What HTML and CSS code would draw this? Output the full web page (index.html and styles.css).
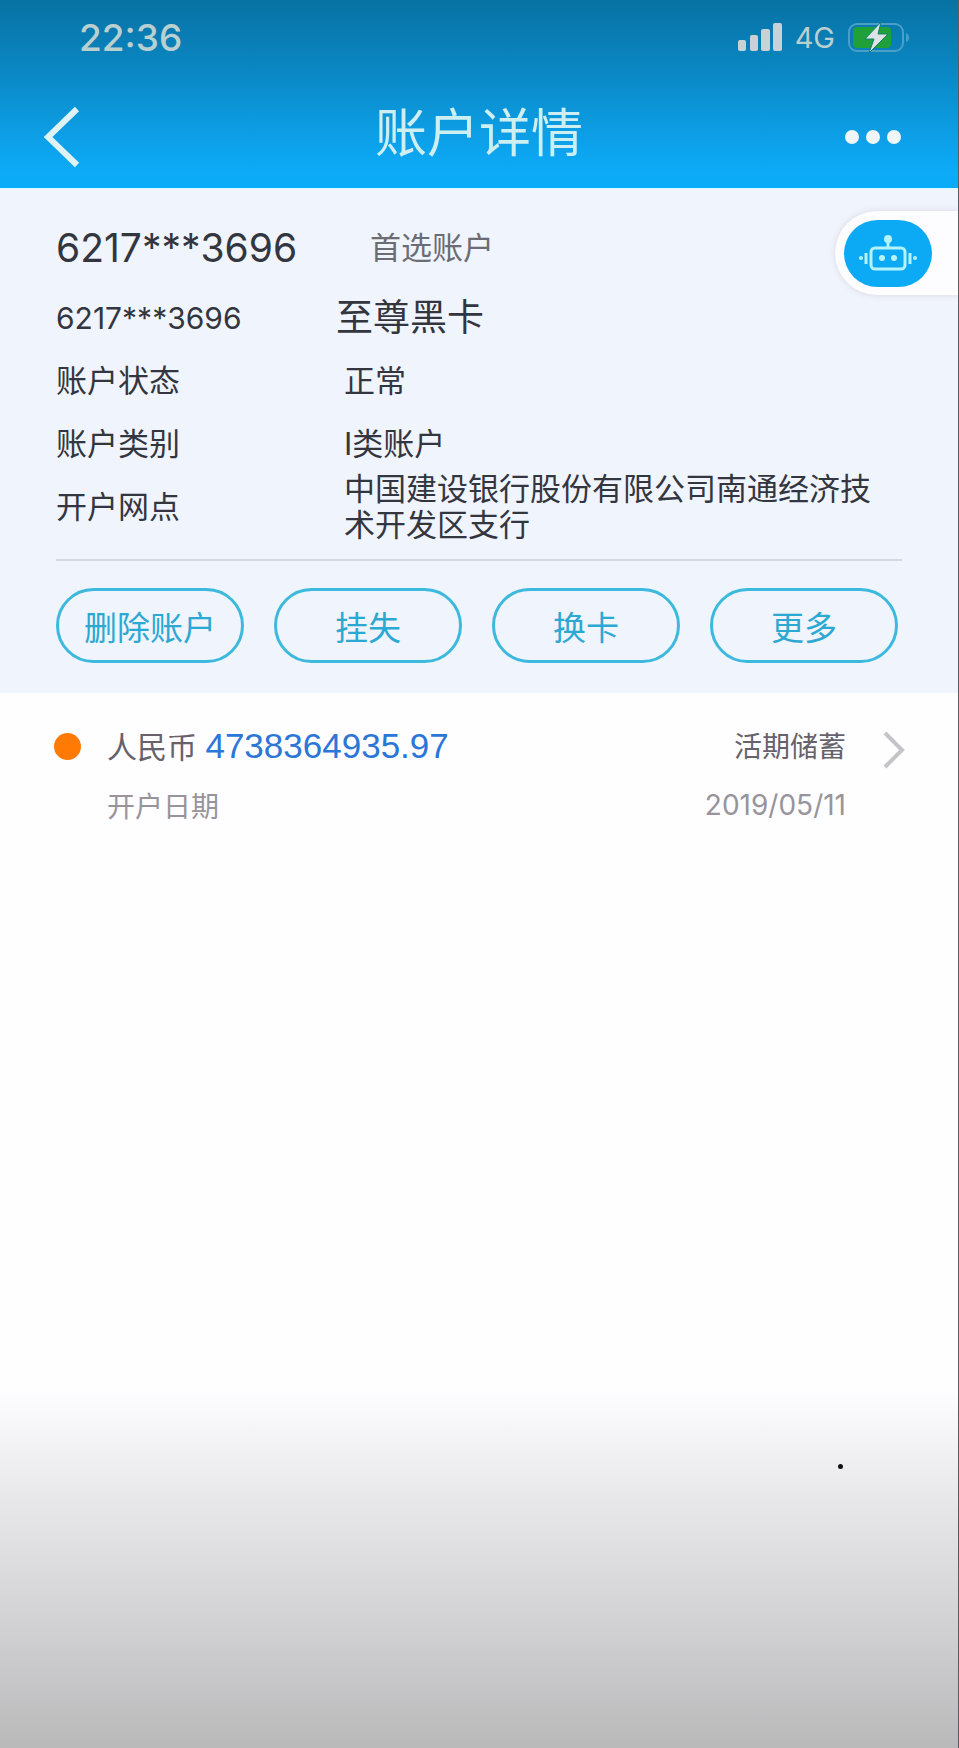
FILE: index.html
```
<!DOCTYPE html>
<html lang="zh-CN">

<head>
    <meta charset="utf-8">
    <meta name="viewport" content="width=device-width, initial-scale=1">
    <title>账户详情</title>
    <link rel="stylesheet" href="styles.css">
</head>

<body>
    <header class="header">
        <div class="statusbar">
            <span class="time">22:36</span>
            <div class="status-icons">
                <svg class="signal" width="44" height="28" viewBox="0 0 44 28">
                    <rect x="0" y="17" width="8" height="11" rx="2" />
                    <rect x="12" y="12" width="8" height="16" rx="2" />
                    <rect x="23" y="6" width="9" height="22" rx="2" />
                    <rect x="35" y="0" width="9" height="28" rx="2" />
                </svg>
                <span class="network">4G</span>
                <svg class="battery" width="62" height="32" viewBox="0 0 62 32">
                    <rect class="battery-case" x="1" y="3" width="54" height="27" rx="8" />
                    <path class="battery-tip" d="M58 12c4 1 4 8 0 9z" />
                    <rect class="battery-level" x="5" y="6" width="38" height="21" rx="4" />
                    <path class="battery-bolt" d="M33 1L17 18h9l-5 14 19-19h-10z" />
                </svg>
            </div>
        </div>
        <nav class="navbar">
            <button class="nav-btn back" type="button" aria-label="返回">
                <svg width="36" height="62" viewBox="0 0 36 62">
                    <path d="M33 3L4 31l29 28" />
                </svg>
            </button>
            <h1 class="title">账户详情</h1>
            <button class="nav-btn more" type="button" aria-label="更多选项">
                <svg width="58" height="16" viewBox="0 0 58 16">
                    <circle cx="8" cy="8" r="7" />
                    <circle cx="29" cy="8" r="7" />
                    <circle cx="50" cy="8" r="7" />
                </svg>
            </button>
        </nav>
    </header>

    <section class="account">
        <dl class="info">
            <div class="row row-main">
                <dt>6217***3696</dt>
                <dd>首选账户</dd>
            </div>
            <div class="row row-card">
                <dt>6217***3696</dt>
                <dd>至尊黑卡</dd>
            </div>
            <div class="row">
                <dt>账户状态</dt>
                <dd>正常</dd>
            </div>
            <div class="row">
                <dt>账户类别</dt>
                <dd>I类账户</dd>
            </div>
            <div class="row">
                <dt>开户网点</dt>
                <dd>中国建设银行股份有限公司南通经济技术开发区支行</dd>
            </div>
        </dl>
        <div class="actions">
            <button type="button">删除账户</button>
            <button type="button">挂失</button>
            <button type="button">换卡</button>
            <button type="button">更多</button>
        </div>
        <button class="assistant" type="button" aria-label="智能客服">
            <span class="assistant-face">
                <svg width="60" height="38" viewBox="0 0 60 38">
                    <circle class="fill" cx="30" cy="5" r="4" />
                    <path d="M30 8v6" />
                    <rect x="13" y="14" width="34" height="21" rx="4" />
                    <circle class="fill" cx="24" cy="24" r="3" />
                    <circle class="fill" cx="36" cy="24" r="3" />
                    <path d="M8 19v11M52 19v11" />
                    <circle class="fill" cx="3" cy="24" r="2" />
                    <circle class="fill" cx="57" cy="24" r="2" />
                </svg>
            </span>
        </button>
    </section>

    <main class="deposits">
        <a class="deposit" href="#">
            <span class="bullet"></span>
            <span class="deposit-text">
                <span class="line">
                    <span>人民币 <b class="amount">4738364935.97</b></span>
                    <span class="type">活期储蓄</span>
                </span>
                <span class="line line-date">
                    <span>开户日期</span>
                    <span>2019/05/11</span>
                </span>
            </span>
            <svg class="arrow" width="22" height="38" viewBox="0 0 22 38">
                <path d="M2 2l17 17L2 36" />
            </svg>
        </a>
        <span class="speck"></span>
    </main>
</body>

</html>
```
FILE: styles.css
```
* {
    box-sizing: border-box;
}

body {
    position: relative;
    display: flex;
    flex-direction: column;
    min-height: 100vh;
    margin: 0;
    border-right: 1px solid #5c5b64;
    background: #fefdff;
    color: #34363f;
    font-family: Inter, "Noto Sans CJK SC", sans-serif;
    font-size: 31px;
}

button {
    padding: 0;
    border: 0;
    background: none;
    font: inherit;
    cursor: pointer;
}

svg {
    display: block;
}

/* header */

.header {
    height: 188px;
    background: linear-gradient(#0872a3, #0a86c2 36%, #0c9ce2 68%, #0dabf8 92%, #0aabf8);
}

.statusbar {
    display: flex;
    align-items: center;
    justify-content: space-between;
    height: 74px;
    padding: 0 48px 0 79px;
    color: #b9cfd0;
}

.time {
    font-size: 37px;
    font-weight: 500;
}

.status-icons {
    display: flex;
    align-items: center;
    gap: 13px;
}

.network {
    font-size: 29px;
}

.signal {
    fill: #c8d2d6;
}

.battery-case {
    fill: none;
    stroke: #4a9fc4;
    stroke-width: 2;
}

.battery-tip {
    fill: #4a9fc4;
}

.battery-level {
    fill: #20a038;
}

.battery-bolt {
    fill: #dde3e4;
    stroke: #128070;
    stroke-width: 1;
}

.navbar {
    display: grid;
    grid-template-columns: 100px 1fr 100px;
    align-items: center;
    height: 114px;
    padding: 0 14px 0 0;
}

.nav-btn {
    display: flex;
    align-items: center;
    height: 80px;
}

.back {
    padding: 12px 0 0 44px;
}

.back path {
    fill: none;
    stroke: #dff3f6;
    stroke-width: 6;
}

.more {
    justify-content: flex-end;
    padding: 12px 42px 0 0;
}

.more svg {
    flex: none;
    fill: #f0f6f8;
}

.title {
    margin: 0;
    padding: 6px 0 0 14px;
    color: #cdeff2;
    font-size: 52px;
    font-weight: 400;
    line-height: 72px;
    text-align: center;
}

/* account panel */

.account {
    position: relative;
    padding: 26px 56px 30px;
    border-top: 1px solid #d5faff;
    background: #f0f4fc;
}

.info {
    margin: 0;
    padding-bottom: 21px;
    border-bottom: 2px solid #d6d9e3;
}

/* a long value may run over the row height, centred on its label */
.row {
    display: grid;
    grid-template-columns: 288px 1fr;
    align-content: center;
    align-items: center;
    height: 63px;
    padding-right: 16px;
    line-height: 36px;
}

.row dd {
    margin: 0;
}

.row-main {
    grid-template-columns: 314px 1fr;
    height: 66px;
}

.row-main dt {
    font-size: 39px;
}

.row-main dd {
    color: #6c6d74;
}

.row-card {
    grid-template-columns: 280px 1fr;
    height: 68px;
    padding-top: 6px;
}

.row-card dt {
    font-size: 30px;
}

.row-card dd {
    font-size: 37px;
}

.actions {
    display: grid;
    grid-template-columns: repeat(4, 1fr);
    gap: 30px;
    padding: 27px 4px 0 0;
}

.actions button {
    height: 75px;
    border: 3px solid #3cb9dd;
    border-radius: 38px;
    color: #2ba9d3;
    font-size: 33px;
}

.assistant {
    position: absolute;
    top: 22px;
    right: 0;
    display: flex;
    align-items: center;
    width: 123px;
    height: 84px;
    padding-left: 9px;
    border-radius: 42px 0 0 42px;
    background: #fdfcff;
    box-shadow: 0 0 6px rgba(120, 110, 130, .2);
}

.assistant-face {
    display: flex;
    align-items: center;
    justify-content: center;
    width: 88px;
    height: 67px;
    border-radius: 34px;
    background: #0ca9f5;
}

.assistant svg {
    fill: none;
    stroke: #b5f3fb;
    stroke-width: 3;
}

.assistant .fill {
    fill: #b5f3fb;
    stroke: none;
}

/* deposit list */

.deposits {
    position: relative;
    flex: 1;
    background: linear-gradient(to top, #b9b9ba, #d4d3d5 38%, #ebeaec 74%, #fefdff) bottom / 100% 360px no-repeat;
}

.deposit {
    display: flex;
    padding: 22px 53px 22px 54px;
    color: #66616a;
    text-decoration: none;
}

.bullet {
    width: 27px;
    height: 27px;
    margin: 18px 26px 0 0;
    border-radius: 50%;
    background: #ff7a05;
}

.deposit-text {
    flex: 1;
}

.line {
    display: flex;
    align-items: center;
    justify-content: space-between;
    height: 60px;
    font-size: 30px;
}

.type {
    font-size: 28px;
}

.amount {
    color: #2b76d6;
    font-family: "Liberation Sans", Arial, sans-serif;
    font-size: 35px;
    font-weight: normal;
}

.line-date {
    color: #98949a;
    font-size: 28px;
}

.arrow {
    margin: 16px 0 0 37px;
    fill: none;
    stroke: #c6c3c9;
    stroke-width: 4;
}

.speck {
    position: absolute;
    right: 115px;
    bottom: 279px;
    width: 5px;
    height: 5px;
    border-radius: 50%;
    background: #111;
}
```
